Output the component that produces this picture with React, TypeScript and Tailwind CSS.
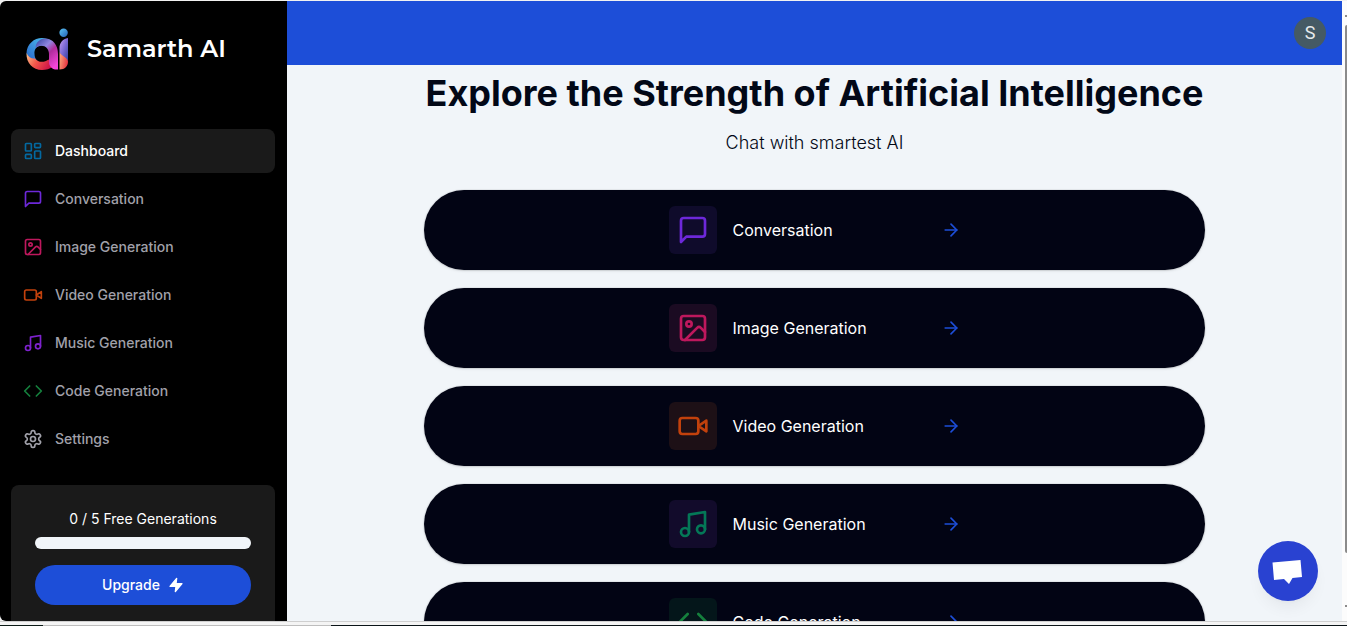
import type { ComponentType, ReactNode } from "react";
import { ArrowRight, Image as ImageIcon, LayoutDashboard } from "lucide-react";

type IconProps = { className?: string };

function Stroke({ className, children }: IconProps & { children: ReactNode }) {
  return (
    <svg
      viewBox="0 0 24 24"
      fill="none"
      stroke="currentColor"
      strokeWidth="2"
      strokeLinecap="round"
      strokeLinejoin="round"
      className={className}
      aria-hidden="true"
    >
      {children}
    </svg>
  );
}

const MessageIcon = ({ className }: IconProps) => (
  <Stroke className={className}>
    <path d="M21 15a2 2 0 0 1-2 2H7l-4 4V5a2 2 0 0 1 2-2h14a2 2 0 0 1 2 2z" />
  </Stroke>
);

const VideoIcon = ({ className }: IconProps) => (
  <Stroke className={className}>
    <path d="m22 8-6 4 6 4V8Z" />
    <rect width="14" height="12" x="2" y="6" rx="2" />
  </Stroke>
);

const MusicIcon = ({ className }: IconProps) => (
  <Stroke className={className}>
    <path d="M9 18V5l12-2v13" />
    <circle cx="6" cy="18" r="3" />
    <circle cx="18" cy="16" r="3" />
  </Stroke>
);

const CodeIcon = ({ className }: IconProps) => (
  <Stroke className={className}>
    <path d="m16 18 6-6-6-6" />
    <path d="m8 6-6 6 6 6" />
  </Stroke>
);

const GearIcon = ({ className }: IconProps) => (
  <Stroke className={className}>
    <path d="M12.22 2h-.44a2 2 0 0 0-2 2v.18a2 2 0 0 1-1 1.73l-.43.25a2 2 0 0 1-2 0l-.15-.08a2 2 0 0 0-2.73.73l-.22.38a2 2 0 0 0 .73 2.73l.15.1a2 2 0 0 1 1 1.72v.51a2 2 0 0 1-1 1.74l-.15.09a2 2 0 0 0-.73 2.73l.22.38a2 2 0 0 0 2.73.73l.15-.08a2 2 0 0 1 2 0l.43.25a2 2 0 0 1 1 1.73V20a2 2 0 0 0 2 2h.44a2 2 0 0 0 2-2v-.18a2 2 0 0 1 1-1.73l.43-.25a2 2 0 0 1 2 0l.15.08a2 2 0 0 0 2.73-.73l.22-.39a2 2 0 0 0-.73-2.73l-.15-.08a2 2 0 0 1-1-1.74v-.5a2 2 0 0 1 1-1.74l.15-.09a2 2 0 0 0 .73-2.73l-.22-.38a2 2 0 0 0-2.73-.73l-.15.08a2 2 0 0 1-2 0l-.43-.25a2 2 0 0 1-1-1.73V4a2 2 0 0 0-2-2z" />
    <circle cx="12" cy="12" r="3" />
  </Stroke>
);

function Logo() {
  return (
    <svg viewBox="0 -1 44 44" className="size-11" role="img" aria-label="Samarth AI logo">
      <defs>
        <linearGradient id="ringTop" x1="0" y1="1" x2="1" y2="0">
          <stop offset="0" stopColor="#2563c9" />
          <stop offset="0.55" stopColor="#3f9be0" />
          <stop offset="1" stopColor="#4cc3ee" />
        </linearGradient>
        <linearGradient id="ringBottom" x1="0" y1="0" x2="1" y2="0.4">
          <stop offset="0" stopColor="#fbc48c" />
          <stop offset="0.5" stopColor="#f4574a" />
          <stop offset="1" stopColor="#d01848" />
        </linearGradient>
        <linearGradient id="stem" x1="0" y1="0" x2="0.7" y2="1">
          <stop offset="0" stopColor="#2b3f9c" />
          <stop offset="0.38" stopColor="#8f86e0" />
          <stop offset="0.6" stopColor="#b02c9c" />
          <stop offset="1" stopColor="#f445d8" />
        </linearGradient>
        <linearGradient id="iTop" x1="0" y1="0" x2="1" y2="1">
          <stop offset="0" stopColor="#c9a0f0" />
          <stop offset="0.5" stopColor="#7a68d4" />
          <stop offset="1" stopColor="#33409c" />
        </linearGradient>
        <linearGradient id="iBottom" x1="0" y1="0.3" x2="1" y2="0.7">
          <stop offset="0" stopColor="#fba57a" />
          <stop offset="1" stopColor="#e62c3c" />
        </linearGradient>
        <linearGradient id="dot" x1="0" y1="0" x2="1" y2="1">
          <stop offset="0" stopColor="#5bc4f4" />
          <stop offset="1" stopColor="#2360b8" />
        </linearGradient>
      </defs>
      <path d="M.5 25C1 16 8 10 16 10c3 0 6 1 8 2l-7 5.500C11 17 8 21 8.500 26c0 3 1 5 3 7C6 33 1 30 .5 25z" fill="url(#ringTop)" />
      <path d="M.5 25c2 4 5 6 8.500 5.500 3 4 9 4.500 13.500 1L27 38c-3 3-7 4-11 4C7 42 0 35 .5 25z" fill="url(#ringBottom)" />
      <path d="M9.500 20c0-5 4-9.500 9.500-9.500C27 10.500 32 17 32 26v15.500c-6 .5-9-3-9-8V26c0-7-7-11-13.500-6z" fill="url(#stem)" />
      <path d="M33.500 20c0-5 3-9 8.500-10v23c-3-2-7-4-8.500-9z" fill="url(#iTop)" />
      <path d="M33.500 24c2 4.500 8 5 8.500 9.500 0 4.500-3 8-8.500 8z" fill="url(#iBottom)" />
      <circle cx="37.600" cy="4.800" r="4.200" fill="url(#dot)" />
    </svg>
  );
}

type Route = {
  label: string;
  icon: ComponentType<IconProps>;
  color: string;
  active?: boolean;
};

const routes: Route[] = [
  { label: "Dashboard", icon: LayoutDashboard, color: "text-[#0369a1]", active: true },
  { label: "Conversation", icon: MessageIcon, color: "text-[#6d28d9]" },
  { label: "Image Generation", icon: ImageIcon, color: "text-[#be185d]" },
  { label: "Video Generation", icon: VideoIcon, color: "text-[#c2410c]" },
  { label: "Music Generation", icon: MusicIcon, color: "text-[#7e22ce]" },
  { label: "Code Generation", icon: CodeIcon, color: "text-[#15803d]" },
  { label: "Settings", icon: GearIcon, color: "text-[#a1a1aa]" },
];

const tools = [
  { label: "Conversation", icon: MessageIcon, color: "text-[#6d28d9]", bg: "bg-[#0f0b2b]" },
  { label: "Image Generation", icon: ImageIcon, color: "text-[#be185d]", bg: "bg-[#1b0b22]" },
  { label: "Video Generation", icon: VideoIcon, color: "text-[#c2410c]", bg: "bg-[#1d1016]" },
  { label: "Music Generation", icon: MusicIcon, color: "text-[#047857]", bg: "bg-[#120b2b]" },
  { label: "Code Generation", icon: CodeIcon, color: "text-[#15803d]", bg: "bg-[#04161a]" },
];

function Sidebar() {
  return (
    <aside className="flex w-[287px] shrink-0 flex-col overflow-hidden rounded-l-md bg-black px-3 pl-[11px]">
      <a href="#home" className="mt-[26px] mb-[58px] flex h-11 shrink-0 items-center gap-[17px] pl-[15px]">
        <Logo />
        <span className="font-[Montserrat,Inter,sans-serif] text-2xl font-semibold text-white">
          Samarth AI
        </span>
      </a>
      <nav className="flex flex-col gap-1">
        {routes.map(({ label, icon: Icon, color, active }) => (
          <a
            key={label}
            href="#"
            className={
              active
                ? "flex h-11 shrink-0 items-center gap-3 rounded-lg bg-[#1a1a1a] px-3 text-sm font-medium text-white"
                : "flex h-11 shrink-0 items-center gap-3 rounded-lg px-3 text-sm font-medium text-[#a1a1aa]"
            }
          >
            <Icon className={`size-5 ${color}`} />
            {label}
          </a>
        ))}
      </nav>
      <section className="mt-6 flex shrink-0 flex-col rounded-lg bg-[#1a1a1a] p-6 text-center text-sm text-white">
        <p className="mb-2">0 / 5 Free Generations</p>
        <div
          role="progressbar"
          aria-valuenow={0}
          aria-valuemax={5}
          aria-label="Free generations used"
          className="mb-4 h-3 rounded-full bg-[#f1f5f9]"
        />
        <button
          type="button"
          className="flex h-10 items-center justify-center gap-2 rounded-full bg-[#1d4ed8] font-medium"
        >
          Upgrade
          <svg viewBox="0 0 24 24" className="size-4" fill="white" stroke="white" strokeWidth="2" strokeLinejoin="round" aria-hidden="true">
            <polygon points="13 2 3 14 12 14 11 22 21 10 12 10 13 2" />
          </svg>
        </button>
      </section>
    </aside>
  );
}

export default function App() {
  return (
    <div className="flex h-screen flex-col overflow-hidden bg-[#f1f1f1] pt-px font-[Inter,sans-serif] text-[#020817]">
      <div className="flex min-h-0 flex-1">
        <Sidebar />
        <div className="flex min-w-0 flex-1 flex-col overflow-hidden bg-[#f1f5f9]">
          <header className="flex h-16 shrink-0 items-center justify-end bg-[#1d4ed8] px-4">
            <button
              type="button"
              aria-label="Account"
              className="flex size-8 items-center justify-center rounded-full bg-[#455a64] font-[Roboto,sans-serif] text-lg text-[#e6eaec]"
            >
              S
            </button>
          </header>
          <main className="mx-auto w-full max-w-[781px] pt-2">
            <h1 className="text-center text-4xl font-bold whitespace-nowrap">
              Explore the Strength of Artificial Intelligence
            </h1>
            <p className="mt-4 mb-[33px] text-center text-lg font-light">Chat with smartest AI</p>
            <div className="flex flex-col gap-[18px]">
              {tools.map(({ label, icon: Icon, color, bg }) => (
                <a
                  key={label}
                  href="#"
                  className="flex h-20 shrink-0 items-center justify-center rounded-full bg-[#020414] text-white shadow-sm ring-1 ring-black/5"
                >
                  <span className="flex w-[292px] items-center gap-4">
                    <span className={`rounded-md p-2 ${bg}`}>
                      <Icon className={`size-8 ${color}`} />
                    </span>
                    <span className="flex-1">{label}</span>
                    <ArrowRight className="size-5 text-[#1d4ed8]" />
                  </span>
                </a>
              ))}
            </div>
          </main>
        </div>
        <div className="flex w-[5px] shrink-0 flex-col items-end bg-[#fcfcfc] pt-3.5" aria-hidden="true">
          <div className="h-0.5 w-0.5 bg-[#8b8b8b]" />
          <div className="mt-2 h-[528px] w-0.5 rounded-l-sm bg-[#8b8b8b]" />
          <div className="mt-[52px] h-0.5 w-0.5 bg-[#8b8b8b]" />
        </div>
      </div>
      <footer className="flex h-[5px] shrink-0 items-end border-t border-[#cfcfcf] bg-[#f4f4f4]" aria-hidden="true">
        <div className="h-px w-[43px] bg-[#0b1a16]" />
        <div className="h-px w-72 bg-[#bdbdbd]" />
        <div className="h-px flex-1 bg-[#0b1418]" />
      </footer>
      <button
        type="button"
        aria-label="Open chat"
        className="fixed right-[29px] bottom-[25px] size-[60px] rounded-full bg-[#2942d1] shadow-lg shadow-black/5"
      >
        <svg viewBox="0 0 60 60" className="size-full" aria-hidden="true">
          <path d="M14.500 21.500 42.500 19l1.500 17-9.500 1-3.500 6-5-5-10 1z" fill="white" />
        </svg>
      </button>
    </div>
  );
}
